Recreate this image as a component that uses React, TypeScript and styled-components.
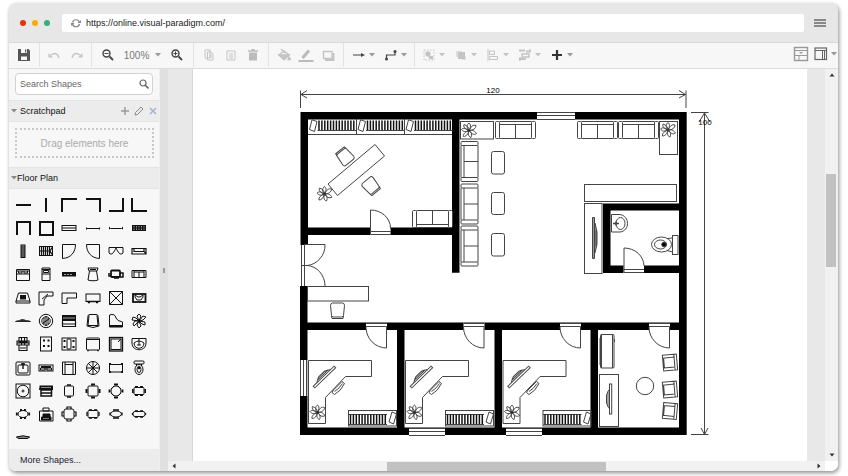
import React from "react";
import styled, { createGlobalStyle, css } from "styled-components";

const Global = createGlobalStyle`
  * { box-sizing: border-box; }
  body { margin: 0; background: #fff; font-family: "Liberation Sans", Arial, sans-serif; }
  button, input { font: inherit; }
`;

const Page = styled.div`
  min-height: 100vh;
  padding: 3px 10px 5px 9px;
  display: flex;
`;
const Win = styled.div`
  flex: 1;
  min-width: 0;
  display: flex;
  flex-direction: column;
  border-radius: 7px;
  overflow: hidden;
  background: #e7e7e7;
  box-shadow: 1px 2px 4px rgba(0, 0, 0, 0.45);
`;

/* browser chrome */
const Chrome = styled.header`
  height: 40px;
  flex: none;
  display: flex;
  align-items: center;
  padding: 0 12px 0 11px;
  border-bottom: 1px solid #dadada;
`;
const Dots = styled.div`
  display: flex;
  gap: 6px;
  margin-right: 12px;
`;
const Dot = styled.span<{ $c: string }>`
  width: 6px;
  height: 6px;
  border-radius: 50%;
  background: ${(p) => p.$c};
`;
const AddressBar = styled.div`
  flex: 1;
  height: 18px;
  display: flex;
  align-items: center;
  gap: 5px;
  padding-left: 9px;
  border-radius: 2px;
  background: #fff;
  margin-right: 10px;
`;
const Address = styled.input`
  flex: 1;
  min-width: 0;
  border: 0;
  padding: 0;
  outline: none;
  background: none;
  color: #222;
  font-size: 9px;
  line-height: 16px;
`;
const Plain = styled.button`
  border: 0;
  padding: 0;
  background: none;
  display: flex;
  align-items: center;
  justify-content: center;
  cursor: pointer;
`;

/* toolbar */
const Bar = styled.nav`
  height: 26px;
  flex: none;
  display: flex;
  background: #f7f7f7;
  border-bottom: 1px solid #dcdcdc;
`;
const Group = styled.div<{ $pad: number; $gap?: number; $last?: boolean }>`
  display: flex;
  align-items: center;
  height: 24px;
  padding: 0 ${(p) => p.$pad}px;
  gap: ${(p) => p.$gap || 0}px;
  ${(p) => !p.$last && css`border-right: 1px solid #e2e2e2;`}
`;
const Tool = styled(Plain)<{ $w?: number; $gap?: number }>`
  width: ${(p) => p.$w || 22}px;
  height: 22px;
  gap: ${(p) => p.$gap || 3}px;
  color: #777;
  font-size: 10px;
`;
const Spacer = styled.div`
  flex: 1;
`;

/* body */
const Body = styled.div`
  flex: 1;
  display: flex;
  min-height: 0;
`;
const Side = styled.aside`
  width: 151px;
  flex: none;
  display: flex;
  flex-direction: column;
  background: #f7f7f7;
  border-right: 1px solid #efefef;
`;
const SearchWrap = styled.label`
  margin: 4px 6px 5px;
  height: 22px;
  display: flex;
  align-items: center;
  padding: 0 3px 0 4px;
  background: #fff;
  border: 1px solid #d2d2d2;
  border-radius: 4px;
`;
const SearchInput = styled.input`
  flex: 1;
  min-width: 0;
  border: 0;
  padding: 0;
  outline: 0;
  background: none;
  font-size: 9px;
  &::placeholder { color: #666; opacity: 1; }
`;
const SectionHead = styled.div`
  height: 22px;
  flex: none;
  display: flex;
  align-items: center;
  padding: 0 0 0 2px;
  background: #ececec;
  border-top: 1px solid #e4e4e4;
  border-bottom: 1px solid #e4e4e4;
`;
const SectionTitle = styled(Plain)<{ $gap: number }>`
  gap: ${(p) => p.$gap}px;
  flex: 1;
  justify-content: flex-start;
  font-size: 9px;
  color: #111;
`;
const HeadActions = styled.div`
  display: flex;
  gap: 2px;
`;
const Mini = styled(Plain)`
  width: 12px;
  height: 12px;
`;
const DropZone = styled.div`
  margin: 6px 5px 9px 6px;
  height: 30px;
  flex: none;
  display: flex;
  align-items: center;
  justify-content: center;
  border: 2px dotted #c9c9c9;
  color: #aaa;
  font-size: 10px;
`;
const Shapes = styled.div`
  flex: 1;
  min-height: 256px;
  padding: 4px 8px 0 2px;
  display: grid;
  grid-template-columns: repeat(6, 1fr);
  grid-template-rows: repeat(11, 1fr);
`;
const More = styled(Plain)`
  height: 22px;
  flex: none;
  justify-content: flex-start;
  padding-left: 11px;
  background: #ececec;
  color: #223;
  font-size: 9px;
`;
const Splitter = styled.div`
  width: 8px;
  flex: none;
  display: flex;
  align-items: center;
  justify-content: center;
  background: #e0e0e0;
`;
const Grip = styled.span`
  width: 2px;
  height: 5px;
  background: #999;
`;
const Work = styled.main`
  flex: 1;
  min-width: 0;
  display: grid;
  grid-template-columns: 1fr 13px;
  grid-template-rows: 1fr 10px;
`;
const Desk = styled.div`
  min-width: 0;
  background: #e8e8e8;
  padding: 0 18px 0 24px;
  display: flex;
`;
const Sheet = styled.div`
  flex: 1;
  min-width: 0;
  background: #fff;
  border-left: 1px solid #d4d8d8;
`;
const Plan = styled.svg`
  display: block;
  width: 100%;
  height: auto;
`;
const VScroll = styled.div`
  display: flex;
  flex-direction: column;
  align-items: center;
  background: #f1f1f1;
`;
const HScroll = styled.div`
  display: flex;
  align-items: center;
  background: #f1f1f1;
`;
const Corner = styled.div`
  background: #fff;
`;
const Arrow = styled(Plain)`
  width: 12px;
  height: 12px;
  flex: none;
`;
const Track = styled.div<{ $v?: boolean }>`
  flex: 1;
  align-self: stretch;
  display: flex;
  flex-direction: ${(p) => (p.$v ? "column" : "row")};
  padding: ${(p) => (p.$v ? "0 2px 0 1px" : "1px 0 0")};
`;
const Gap = styled.span<{ $n: number }>`
  flex: ${(p) => p.$n};
`;
const Thumb = styled.span<{ $n: number }>`
  flex: ${(p) => p.$n};
  background: #c1c1c1;
`;

const Svg = ({ s = 16, c = "#555", children }: { s?: number; c?: string; children: React.ReactNode }) => (
  <svg width={s} height={s} viewBox={`${-s / 2} ${-s / 2} ${s} ${s}`} fill="none" stroke={c} strokeWidth="1.4" aria-hidden="true">
    {children}
  </svg>
);
const Caret = ({ c = "#999" }: { c?: string }) => (
  <svg width="6" height="4" viewBox="0 0 6 4" aria-hidden="true"><path d="M0 0H6L3 3.5Z" fill={c} /></svg>
);
const light = "#c4c4c4";

/* palette thumbnails, each centred on the origin */
const table = (w: number, h: number, r = 1) => <rect x={-w} y={-h} width={2 * w} height={2 * h} rx={r} />;
const B = { fill: "#111", stroke: "none" };

const shapes: [string, React.ReactNode][] = [
  ["Wall", <path d="M-7 0H8" strokeWidth="2" />],
  ["Vertical wall", <path d="M0-7V7" strokeWidth="2" />],
  ["Corner 1", <path d="M-7 7V-6H8" strokeWidth="2" />],
  ["Corner 2", <path d="M-7-6H7V7" strokeWidth="2" />],
  ["Corner 3", <path d="M7-7V6H-7" strokeWidth="2" />],
  ["Corner 4", <path d="M-7-7V6H8" strokeWidth="2" />],
  ["U wall", <path d="M-6 7V-6H7V7" strokeWidth="2" />],
  ["Room", <path d="M-6-6H7V7H-6Z" strokeWidth="2" />],
  ["Window", <><rect x="-7" y="-2.5" width="14" height="5" /><path d="M-7 0H7" /></>],
  ["Opening", <path d="M-6.5-.5V1.5M6.5-.5V1.5M-6.5.5H6.5" />],
  ["Sliding door", <path d="M-6.5-1V1L-5.5 .5H5.5L6.5 1V-1" />],
  ["Stairs", <><rect x="-7" y="-3" width="14" height="6" {...B} /><path d="M-5-2V2M-2.5-2V2M0-2V2M2.5-2V2M5-2V2" stroke="#bbb" strokeDasharray="1.5 1" strokeWidth=".8" /></>],
  ["Vertical stairs", <><rect x="-2.5" y="-6.5" width="5" height="13.5" {...B} /><path d="M-1.5-5H1.5M-1.5-3H1.5M-1.5-1H1.5M-1.5 1H1.5M-1.5 3H1.5M-1.5 5H1.5" stroke="#ddd" strokeWidth=".7" /></>],
  ["Landing stairs", <><rect x="-6.5" y="-4.5" width="13" height="9" /><path d="M-4.5-4.5V4.5M-2.5-4.5V4.5M-.5-4.5V4.5M1.5-4.5V4.5M-6.5 0H4L6.5-4M4 0L6.5 4M3.5-4.5V4.5" strokeWidth="1.2" /></>],
  ["Door left", <path d="M-6.5-6.5H6.5C6.5 1 2 7-6.5 7.5Z" />],
  ["Door right", <path d="M6.5-6.5H-6.5C-6.5 1-2 7 6.5 7.5Z" />],
  ["Folding door", <path d="M-7-3.5H7V2C4 5 2 1 0-3C-2 1-4 5-7 2Z" />],
  ["Counter sink", <path d="M-7-2.5H7V3H-7ZM-5-2.5V.5H5V-2.5M5 .5L7 3" strokeWidth="1.2" />],
  ["Double bed", <path d="M-6.5-4.5H6.5V6.5H-6.5ZM-6.5-3H6.5M-4.5-3V-1H-1V-3M1-3V-1H4.5V-3M-6.5 0H6.5" />],
  ["Single bed", <path d="M-4-6H4V6.5H-4ZM-4-4.5H4M-2.5-3.5H2.5V-1.5H-2.5ZM-4 0H4" />],
  ["Bookcase", <><rect x="-7" y="-2" width="14" height="4.5" {...B} /><path d="M-5 .5H4" stroke="#ccc" strokeDasharray="2 1" strokeWidth=".8" /></>],
  ["Chair", <path d="M-5-6H5L4-3H-4ZM-3.5-3L-5 6C-3 7 3 7 5 6L3.5-3M-3-4.5H3" />],
  ["Copier", <><rect x="-5" y="-3.5" width="9" height="6.5" rx="1" strokeWidth="1.8" /><path d="M-7-1V2H-5M4-1H7V3H4M-2 4H3" strokeWidth="1.5" /></>],
  ["Couch", <path d="M-7-3.5H7V3.5H-7ZM-5-3.5V3.5M5-3.5V3.5M0-2V3.5M-5-2H5" />],
  ["Desk corner", <><path d="M-4.5-5H4.5L7 3V5H-7V3ZM-7 3H7" /><rect x="-3" y="-3" width="6" height="4.5" {...B} /></>],
  ["Corner desk", <path d="M-7-6H7V-2H1L-2 2V7H-7ZM-4 1L2-4" />],
  ["L desk", <path d="M-7-5H7.5V0H-2V5.5H-7Z" />],
  ["Dresser", <><rect x="-7" y="-4" width="14" height="7.5" /><path d="M-5 4.5H-3M3 4.5H5M-6 3.5H6" strokeWidth="1.5" /></>],
  ["Elevator", <path d="M-6.5-6.5H6.5V6.5H-6.5ZM-6.5-6.5L6.5 6.5M6.5-6.5L-6.5 6.5" />],
  ["Fireplace", <><rect x="-6" y="-4" width="12.5" height="8" strokeWidth="1.8" /><path d="M-4-3V-1L-2 2H2L4-1V-3L1-1H-1Z" /></>],
  ["Flat TV", <path d="M-7.5 .5H7.5L5-.3H3L1-1.3H-2L-3.5-.3H-5Z" fill="#333" strokeWidth=".8" />],
  ["Floor lamp", <><circle r="6.7" /><circle r="4.2" /><path d="M-2-3V3M0-5V5M2-3V3M-3 2L3-2" /></>],
  ["Keyboard piano", <><rect x="-7" y="-6" width="14" height="6" {...B} /><path d="M-6.5 0V5.5H6.5V0M-7 3H7M-2 5.5H2" strokeWidth="1.2" /><path d="M-6-3H6" stroke="#ccc" strokeWidth=".8" /></>],
  ["Office chair", <path d="M-5-5Q-5-6.5-3-6.5H3Q5-6.5 5-5L6 5Q0 8-6 5ZM-4-5.5L-5 4.5H5L4-5.5" />],
  ["Piano", <path d="M-6.5 6V-6Q-1-8 0-3Q1 0 6.5 1V6ZM-6.5 4.5H6.5M-6.5 5.5H6.5" />],
  ["Plant", <path d="M0 0L-2-5L0-7L2-5ZM0 0L4-5L7-4L4-1ZM0 0L6 1L6 4L3 3ZM0 0L2 5L0 7L-2 4ZM0 0L-5 5L-6 3L-4 0ZM0 0L-7-1L-6-4L-3-3Z" />],
  ["Printer", <path d="M-4-6.5H4V-2H-4ZM-6-3H6V1H-6ZM-4 1V6.5H4V1M-1.5-6V1M1.5-6V1M-3 4H3M-6-1H6" strokeWidth="1.1" />],
  ["Range", <><rect x="-5.5" y="-7" width="11" height="14" /><path d="M-3-3.5H-1M1.5-3.5H3.5M-3 2H-1M1.5 2H3.5" strokeWidth="2" /></>],
  ["Range 2", <><rect x="-7" y="-6" width="14" height="12" /><rect x="-2" y="-5" width="4" height="10" rx="1" /><path d="M-5.5-3H-3.5M3.5-3H5.5M-5.5 3H-3.5M3.5 3H5.5" strokeWidth="2" /></>],
  ["Refrigerator", <><rect x="-6.5" y="-6" width="13" height="12" rx="1" /><path d="M-6.5-4.5H6.5M-6 6.7H-4M4 6.7H6" /></>],
  ["Shower", <><rect x="-6.5" y="-6.5" width="13" height="13.5" strokeWidth="1.3" /><rect x="-5" y="-5" width="10" height="10.5" /><path d="M2-2L5-5" /></>],
  ["Basin", <path d="M-7-5.5H7V-1C7 8-7 8-7-1ZM-5-1Q0-5 5-1C5 6-5 6-5-1ZM0-5V1M-2 1H2" />],
  ["Sink", <><rect x="-7" y="-6" width="14" height="13" rx="1" /><rect x="-5" y="-3" width="10" height="8" rx="1" /><path d="M0-5V1M-2-4H2" strokeWidth="1.4" /></>],
  ["Double sink", <><rect x="-7" y="-3" width="14" height="6" /><path d="M-5.5 0H-1V2H-5.5ZM1 0H5.5V2H1ZM0-2V2" /><path d="M-5-1H5" strokeWidth="1.8" /></>],
  ["Armchair", <path d="M-6.5-6H6.5V6.5H-6.5ZM-4-6V6.5M4-6V6.5M-4-3.5H4" />],
  ["Spiral stairs", <><circle r="6.5" /><circle r="1" /><path d="M0-6.5V6.5M-6.5 0H6.5M-4.6-4.6L4.6 4.6M-4.6 4.6L4.6-4.6" /></>],
  ["Low table", <><rect x="-6.5" y="-3.5" width="13" height="7.5" /><path d="M-7-4H-5M5-4H7M-7 4H-5M5 4H7" strokeWidth="2" /></>],
  ["Toilet", <><rect x="-5" y="-7" width="10" height="3" rx="1" /><ellipse cy="1.5" rx="4" ry="5" /><ellipse cy="1.5" rx="2" ry="3" /><circle cy="0" r="1.2" {...B} /><path d="M-2.5-4V-2M2.5-4V-2" /></>],
  ["Tub", <><rect x="-7" y="-7" width="14" height="14" /><circle r="5.8" /><circle r="1" /></>],
  ["Workstation", <><path d="M-6.5-5.5H7V-1H-6.5Z" {...B} /><path d="M-5-1H5.5V5H-5ZM-5 2H5.5M-7-2H7" strokeWidth="1.5" /><path d="M-5-3.5H5" stroke="#aaa" strokeWidth=".8" /></>],
  ["Table 2", <>{table(4.5, 5)}<path d="M-2-6H2M-2 6H2" strokeWidth="1.6" /></>],
  ["Table 4", <>{table(5, 5)}<path d="M-2-6.5H2M-2 6.5H2M-6.5-2V2M6.5-2V2" strokeWidth="2" /></>],
  ["Round table 4", <><circle r="5" /><path d="M-6.5-1.5V1.5M6.5-1.5V1.5M-2-6.5H2M-2 6.5H2" strokeWidth="1.8" /><path d="M-5-2L-2-5M5-2L2-5M-5 2L-2 5M5 2L2 5" /></>],
  ["Table 6", <>{table(5, 3.5)}<path d="M-4-4.3H-1M1-4.3H4M-4 4.3H-1M1 4.3H4M-6.2-2V2M6.2-2V2" strokeWidth="1.6" /></>],
  ["Oval table", <><ellipse rx="5" ry="3.5" /><path d="M-3-4H-1M1-4H3M-3 4H-1M1 4H3M-6.2-1.5V1.5M6.2-1.5V1.5" strokeWidth="1.8" /></>],
  ["Desk workstation", <><path d="M-6.5-3H7V7H-6.5ZM-3-6H3V-3H-3Z" /><path d="M-3 0H4V3H-3ZM-4.5 3H5V6H-4.5Z" fill="#111" /><path d="M-3 4.5H3" stroke="#aaa" strokeWidth=".7" /></>],
  ["Square table 8", <>{table(5, 5, 2)}<path d="M-2-5V-7H2V-5M-2 5V7H2V5M-5-2H-7V2H-5M5-2H7V2H5" strokeWidth="1.2" /></>],
  ["Table 6 small", <>{table(5, 3.5)}<path d="M-4-4H-1M1-4H4M-4 4H-1M1 4H4M-6-2V2M6-2V2" strokeWidth="1.3" /></>],
  ["Oval table 6", <><ellipse rx="5.5" ry="3" /><path d="M-3-4H3M-3 4H3M-6-1.5V1.5M6-1.5V1.5" strokeWidth="1.3" /></>],
  ["Oval table 8", <>{table(6, 2.5, 2)}<path d="M-4-3H-1M1-3H4M-4 3H-1M1 3H4M-6.5-1V1M6.5-1V1" strokeWidth="1.3" /></>],
  ["Curved screen", <path d="M-6.5 0Q0-2.5 6.5 0L5 1.5H-5ZM-6.5 0H6.5" />],
];

/* floor plan parts */
type P = { x: number; y: number; r?: number };
const at = ({ x, y, r = 0 }: P) => `translate(${x} ${y}) rotate(${r})`;

const Plant = (p: P) => (
  <g transform={at(p)} strokeWidth="1">
    <path d="M0 0C-3-3-2-6 0-7.5C2-6 2-3 0 0ZM0 0C2-4 4-6 7-5C7-2 4 0 0 0ZM0 0C4-1 6 1 7.5 3C5 5 2 3 0 0ZM0 0C3 2 3 5 2 7C-1 6-1 3 0 0ZM0 0C-1 4-3 6-5.5 6C-6 3-3 1 0 0ZM0 0C-4 2-6 1-7.5-1C-6-3-3-2 0 0ZM0 0C-4-1-6-4-5-6C-2-5 0-3 0 0Z" />
    <circle r="1.2" fill="#222" />
  </g>
);
const Sofa = (p: P) => (
  <g transform={at(p)}>
    <rect x="-20" y="-8.5" width="4" height="17" rx="1" />
    <rect x="16" y="-8.5" width="4" height="17" rx="1" />
    <path d="M-16-8.5H16M-16-5.5H16M-16 8.5H16M0-5.5V8.5" />
  </g>
);
const Chair = (p: P) => (
  <g transform={at(p)}>
    <path d="M-7-5Q-7-7-5-7.5H5Q7-7.5 7-5L6 5Q6 6.5 4 6.5H-4Q-6 6.5-6 5ZM-6 5.5L-5.5 8H5.5L6 5.5" />
  </g>
);
const Armchair = (p: P) => (
  <g transform={at(p)}>
    <path d="M-7-8H7V8H-7ZM-7-5H4.5V5H-7M4.5-8V8M-6-5V5" />
  </g>
);
const Books = ({ x, y, n = 13, flip }: { x: number; y: number; n?: number; flip?: boolean }) => (
  <g transform={`translate(${x} ${y})`}>
    {Array.from({ length: n }, (_, i) => (
      <path key={i} d={`M${(flip ? 2.5 : 11) + i * 2.9} 1.5V11.5`} stroke="#111" strokeWidth="1.5" />
    ))}
    {!flip && <path d="M9.5 11.5H48" />}
    {flip ? <path d="M1 11.5H39M41 9L44-1L48.5 1L45.5 11Z" /> : <path d="M1.5 10.5L4 .8L9 2.500L6.5 12.5Z" />}
  </g>
);
const Door = ({ x, y }: { x: number; y: number }) => (
  <g>
    <rect x={x} y={y} width="21" height="8" fill="#fff" stroke="none" />
    <path d={`M${x} ${y + 0.5}H${x + 21}M${x} ${y + 3.5}H${x + 20.5}V${y + 25}A20.5 21 0 0 1 ${x} ${y + 4}`} />
  </g>
);
const DoorUp = ({ x, y }: { x: number; y: number }) => (
  <g>
    <rect x={x} y={y} width="20.5" height="8" fill="#fff" stroke="none" />
    <path d={`M${x + 20.5} ${y + 7.5}H${x + 0.5}V${y - 17}A20 18 0 0 1 ${x + 20.5} ${y + 1}M${x} ${y + 4.5}H${x + 20.5}`} />
  </g>
);
const HWindow = ({ x, y, w }: { x: number; y: number; w: number }) => (
  <g>
    <rect x={x} y={y} width={w} height="8" fill="#fff" stroke="none" />
    <path d={`M${x} ${y + 0.5}H${x + w}M${x} ${y + 3.5}H${x + w}M${x} ${y + 7.5}H${x + w}`} />
  </g>
);
const Screen = (p: P & { len?: number }) => {
  const h = (p.len || 30) / 2;
  return (
    <g transform={at(p)}>
      <rect x="1" y={-h} width="2.2" height={h * 2} />
      <path d={`M1 ${-h * 0.65}L-.5 ${-h * 0.5}L-2-4V4L-.5 ${h * 0.5}L1 ${h * 0.65}M-.5 ${-h * 0.5}V${h * 0.5}`} />
    </g>
  );
};
const Office = ({ x }: { x: number }) => (
  <g transform={`translate(${x} 0)`}>
    <path d="M308.5 360.5H371.5V376.5H345.5L325.5 397.5V423.5H308.5Z" />
    <Screen x={323} y={375.5} r={46} len={29} />
    <path d="M333.5 390L342 381.5L344.5 383.500Q341 391 334.500 394.500L332 392.500ZM334.500 391.500Q339 389 342.500 383.500" />
    <Plant x={317.5} y={412.5} />
    <rect x="348.5" y="410.5" width="48" height="15.5" />
    <path d="M348.5 414.5H387" />
    <Books x={348} y={413} flip />
  </g>
);

const FloorPlan = () => (
  <Plan viewBox="193 69 614 392" role="img" aria-label="Floor plan" fill="none" stroke="#444" strokeWidth="1">
    <path d="M300.5 90.5V108M686 90.5V108M301 94.5H686M307 90.5L301 94.5L307 98M679 90.5L685.5 94.5L679 98" />
    <path d="M691 112.5H708.5M691 434.5H708.5M704.5 113V434.5M699 122L704.5 113L710 122M701 428L704.5 434.5L708 428" />
    <path fill="#000" stroke="none" fillRule="evenodd" d="M300.5 112H686.7V435H300V286H307.5V322.5H679V273H603V203.5H679V119.5H459.5V272.7H452V235H308V245H300.5ZM308 119.5V227.5H452V119.5ZM610.5 210.5V265.5H679V210.5ZM307.5 330V427.5H397V330ZM404.5 330V427.5H494.5V330ZM502 330V427.5H590.5V330ZM598 330V427.5H679V330Z" />
    <HWindow x={537} y={112} w={38} />
    <HWindow x={409} y={428} w={36} />
    <HWindow x={506} y={428} w={36} />
    <rect x="300" y="360" width="7.5" height="36" fill="#fff" stroke="none" />
    <path d="M300.5 360V396M303.5 360V396M306.5 360V396M301.5 245V286M304.5 245V286" />
    <path d="M304 244.5H325A20 20.5 0 0 1 307 265.5H301M307 265.5A19 20.5 0 0 1 325 286" />
    <DoorUp x={370} y={227} />
    <DoorUp x={623.5} y={265} />
    <Door x={366} y={323} />
    <Door x={463.5} y={323} />
    <Door x={560} y={323} />
    <Door x={649} y={323} />

    <path d="M308 134.5H452M356.5 119V134.5M404.5 119V134.5" />
    <Books x={308} y={119} />
    <Books x={356.5} y={119} />
    <Books x={404.5} y={119} />
    <path d="M375 144.5L384.5 156L337.5 195.5L328 184Z" />
    <Chair x={345} y={156.5} r={141} />
    <Chair x={371} y={186} r={-40} />
    <Plant x={324.5} y={194} />
    <Sofa x={432.5} y={219} r={180} />

    <rect x="460.5" y="121.5" width="33" height="17.5" />
    <Plant x={469} y={130.5} />
    <Sofa x={515.5} y={130} />
    <Sofa x={597.5} y={130} />
    <Sofa x={638.5} y={130} />
    <rect x="659.5" y="121.5" width="18" height="33" />
    <Plant x={668} y={130} />
    <Sofa x={469.5} y={161.5} r={-90} />
    <Sofa x={469.5} y={204} r={-90} />
    <Sofa x={469.5} y={246} r={-90} />
    <rect x="491.5" y="151.5" width="13" height="22.5" rx="2" />
    <rect x="491.5" y="192.5" width="13" height="22" rx="2" />
    <rect x="491.5" y="233.5" width="13" height="22.5" rx="2" />
    <rect x="584.5" y="184.5" width="92" height="17" />
    <rect x="584.5" y="203.5" width="17.5" height="70" />
    <path d="M592.5 217.5H594.5V258.5H592.5ZM595 223L597 232V244L595 253M596 230V246" fill="#999" />

    <path d="M611.5 214.5H620C630 216 630 231 620 232H611.5Z" />
    <ellipse cx="620.5" cy="223.5" rx="4.5" ry="6" />
    <path d="M613 223.5H619M616 221.5V225.5" strokeWidth="1.5" />
    <rect x="672.5" y="235.5" width="5.5" height="19" />
    <ellipse cx="661.5" cy="244.5" rx="10" ry="7.5" />
    <ellipse cx="660.5" cy="244.5" rx="6" ry="4.5" />
    <circle cx="664" cy="244.5" r="2.3" fill="#000" />
    <path d="M667 238.5L672.5 238M667 250.5L672.5 252" />

    <rect x="307.5" y="286.5" width="61" height="14.5" />
    <Chair x={337.5} y={310.5} />

    <Office x={0} />
    <Office x={97} />
    <Office x={194.5} />

    <rect x="600.5" y="334.5" width="13.5" height="33.5" rx="1" />
    <path d="M601.5 334V368M612.5 334V368M600 338V365M614.5 339V342" />
    <rect x="599.5" y="374.5" width="19" height="52" />
    <Screen x={608.5} y={399} len={30} />
    <circle cx="645" cy="386" r="8.7" />
    <Armchair x={670} y={362.5} r={-5} />
    <Armchair x={670} y={389.5} r={-5} />
    <Armchair x={670} y={411} r={5} />

    <g fill="#000" stroke="none" fontFamily="Liberation Sans, Arial, sans-serif" fontSize="8" textAnchor="middle">
      <text x="493" y="93">120</text>
      <text x="705" y="125">100</text>
    </g>
  </Plan>
);

const Glass = ({ sign }: { sign?: string }) => (
  <Svg s={14} c="#444"><circle cx="-1.5" cy="-1.5" r="3.5" strokeWidth="1.4" /><path d="M1.5 1.5L5 5" strokeWidth="1.8" />{sign && <path d={sign} strokeWidth="1" />}</Svg>
);

export default function App() {
  return (
    <>
      <Global />
      <Page>
        <Win>
          <Chrome>
            <Dots><Dot $c="#e0350b" /><Dot $c="#fbac00" /><Dot $c="#33b077" /></Dots>
            <AddressBar>
              <Plain aria-label="Reload"><Svg s={10} c="#888"><path d="M3.5-.5A3.6 3.6 0 0 0-3.5-.5M-3.5 1A3.6 3.6 0 0 0 3.5 1M2-.5H4.5V-2.5M-2 .5H-4.5V2.5" strokeWidth="1.2" /></Svg></Plain>
              <Address aria-label="Address" defaultValue="https://online.visual-paradigm.com/" />
            </AddressBar>
            <Plain aria-label="Menu"><Svg s={12} c="#888"><path d="M-6-3H6M-6 0H6M-6 3H6" strokeWidth="2" /></Svg></Plain>
          </Chrome>
          <Bar aria-label="Editor toolbar">
            <Group $pad={4}>
              <Tool aria-label="Save"><Svg s={12}><path d="M-6-6H4.500L6-4.500V6H-6Z" fill="#555" stroke="none" /><path d="M-3-6H3V-2H-3ZM-3 1.5H3V5H-3Z" fill="#f7f7f7" stroke="none" /><rect x="1" y="-5.500" width="1.200" height="3" fill="#555" stroke="none" /></Svg></Tool>
            </Group>
            <Group $pad={3} $gap={1}>
              <Tool aria-label="Undo"><Svg s={14} c={light}><path d="M5 3Q3-4-3 0" /><path d="M-5.5-2V2.5H-1Z" fill={light} stroke="none" /></Svg></Tool>
              <Tool aria-label="Redo"><Svg s={14} c={light}><path d="M-5 3Q-3-4 3 0" /><path d="M5.5-2V2.5H1Z" fill={light} stroke="none" /></Svg></Tool>
            </Group>
            <Group $pad={5} $gap={3}>
              <Tool aria-label="Zoom out"><Glass sign="M-3.5-1.5H.5" /></Tool>
              <Tool $w={41} $gap={6} aria-label="Zoom level">100%<Caret /></Tool>
              <Tool aria-label="Zoom in"><Glass sign="M-3.5-1.5H.5M-1.5-3.5V.5" /></Tool>
            </Group>
            <Group $pad={4}>
              <Tool aria-label="Copy"><Svg s={12} c={light}><path d="M-4-5H1V3H-4ZM-1.5-3H2L4-1V5H-1.5Z" fill="#f7f7f7" strokeWidth="1" /><path d="M0 0H3M0 2H3" strokeWidth="1" /></Svg></Tool>
              <Tool aria-label="Paste"><Svg s={12} c={light}><path d="M-4-4H4V5H-4Z" strokeWidth="1" /><path d="M-2-1H2M-2 1H2M-2 3H2" strokeWidth="1" /></Svg></Tool>
              <Tool aria-label="Delete"><Svg s={12} c="#bbb"><path d="M-4-2.5H4V5.5H-4Z" fill="#bbb" stroke="none" /><path d="M-5-4H5M-1.5-5.3H1.5" /></Svg></Tool>
            </Group>
            <Group $pad={4}>
              <Tool aria-label="Fill colour"><Svg s={14} c={light}><path d="M-5 0L0-4L5 0L0 4.5Z" /><path d="M-5 0H5L0 4.5ZM5 2L6.5 4.5H4Z" fill={light} /><path d="M-3-6L1-2" /></Svg></Tool>
              <Tool aria-label="Line colour"><Svg s={16} c="#bbb"><path d="M-3.5 3L3-4.5" strokeWidth="3" /><path d="M-7.5 6H7.5" strokeWidth="2" /></Svg></Tool>
              <Tool aria-label="Shadow"><Svg s={14} c={light}><path d="M-3 5H5.5V-2" strokeWidth="2" /><rect x="-4.5" y="-3.5" width="8.5" height="7" fill="#f7f7f7" /></Svg></Tool>
            </Group>
            <Group $pad={3}>
              <Tool $w={32} aria-label="Connection"><Svg s={14} c="#444"><path d="M-6 0H3" strokeWidth="1.2" /><path d="M2-2L6 0L2 2Z" fill="#444" stroke="none" /></Svg><Caret /></Tool>
              <Tool $w={32} aria-label="Waypoints"><Svg s={14} c="#444"><path d="M-4.5 4V0H4V-4" strokeWidth="1.2" /><circle cx="-4.5" cy="4" r="1.5" fill="#444" stroke="none" /><circle cx="4" cy="-3.5" r="1.5" fill="#444" stroke="none" /></Svg><Caret /></Tool>
            </Group>
            <Group $pad={2} $last>
              <Tool $w={32} aria-label="Group"><Svg s={14} c={light}><rect x="-5" y="-5" width="10" height="10" strokeDasharray="1.5 1.5" strokeWidth="1" /><circle cx="-1" cy="-1" r="2.7" fill={light} stroke="none" /><path d="M0 1H4V4H0Z" fill={light} stroke="none" /></Svg><Caret c={light} /></Tool>
              <Tool $w={32} aria-label="Order"><Svg s={14} c={light}><path d="M-5-4H1V2H-5ZM1 1H5V5H1Z" fill="#ddd" stroke="none" /><path d="M-3-3H4V4H-3Z" fill={light} stroke="none" /></Svg><Caret c={light} /></Tool>
              <Tool $w={32} aria-label="Align"><Svg s={14} c={light}><path d="M-5-6V6M-3.5-4H1.5V-.5H-3.5ZM-3.5 1.5H4.5V4.5H-3.5Z" strokeWidth="1" /></Svg><Caret c={light} /></Tool>
              <Tool $w={32} aria-label="Distribute"><Svg s={14} c={light}><path d="M-6-4.5H0M1-3.500H6M-6 4H1" strokeWidth="2" /><path d="M-3-1H4V2H-3ZM5-6V-3M-5 2V6" /></Svg><Caret c={light} /></Tool>
              <Tool $w={32} aria-label="Insert"><Svg s={14} c="#333"><path d="M-5 0H5M0-5V5" strokeWidth="2.2" /></Svg><Caret /></Tool>
            </Group>
            <Spacer />
            <Tool aria-label="Format panel"><Svg s={16} c="#999"><rect x="-6.5" y="-6.5" width="13" height="13" /><path d="M-6-3.5H6M-6 1.5H6M-2 1.5V6" strokeWidth="1" /><path d="M-2-2H2L0 0Z" fill="#999" stroke="none" /></Svg></Tool>
            <Tool $w={26} aria-label="Layout"><Svg s={14} c="#666"><rect x="-6" y="-6" width="11.5" height="11.5" strokeWidth="1.2" /><path d="M-6-3.5H5.5M1.5-3V5M3.5-3V5" strokeWidth="1" /></Svg><Caret /></Tool>
          </Bar>
          <Body>
            <Side>
              <SearchWrap>
                <SearchInput placeholder="Search Shapes" aria-label="Search Shapes" />
                <Svg s={10} c="#666"><circle cx="-1" cy="-1" r="3" strokeWidth="1.2" /><path d="M1 1L4.5 4.5" strokeWidth="1.6" /></Svg>
              </SearchWrap>
              <SectionHead>
                <SectionTitle $gap={3}><Caret c="#888" />Scratchpad</SectionTitle>
                <HeadActions>
                  <Mini aria-label="Add"><Svg s={10} c="#999"><path d="M-4 0H4M0-4V4" /></Svg></Mini>
                  <Mini aria-label="Edit"><Svg s={10} c="#888"><path d="M-4 4L-3.5 1.5L2-4L4-2L-1.5 3.5Z" strokeWidth="1" /></Svg></Mini>
                  <Mini aria-label="Close"><Svg s={10} c="#9fb0cf"><path d="M-3-3L3 3M3-3L-3 3" /></Svg></Mini>
                </HeadActions>
              </SectionHead>
              <DropZone>Drag elements here</DropZone>
              <SectionHead>
                <SectionTitle $gap={0}><Caret c="#888" />Floor Plan</SectionTitle>
              </SectionHead>
              <Shapes>
                {shapes.map(([name, art]) => (
                  <Plain key={name} aria-label={name}>
                    <svg width="16" height="16" viewBox="-8 -8 16 16" fill="none" stroke="#111" strokeWidth="1" aria-hidden="true">{art}</svg>
                  </Plain>
                ))}
              </Shapes>
              <More>More Shapes...</More>
            </Side>
            <Splitter><Grip /></Splitter>
            <Work>
              <Desk><Sheet><FloorPlan /></Sheet></Desk>
              <VScroll>
                <Arrow aria-label="Scroll up"><Svg s={8} c="none"><path d="M-2.5 1.5L0-1.5L2.5 1.5Z" fill="#333" /></Svg></Arrow>
                <Track $v><Gap $n={93} /><Thumb $n={93} /><Gap $n={182} /></Track>
                <Arrow aria-label="Scroll down"><Svg s={8} c="none"><path d="M-2.5-1.5L0 1.5L2.5-1.5Z" fill="#333" /></Svg></Arrow>
              </VScroll>
              <HScroll>
                <Arrow aria-label="Scroll left"><Svg s={8} c="none"><path d="M1.5-2.5L-1.5 0L1.5 2.5Z" fill="#333" /></Svg></Arrow>
                <Track><Gap $n={207} /><Thumb $n={219} /><Gap $n={207} /></Track>
                <Arrow aria-label="Scroll right"><Svg s={8} c="none"><path d="M-1.5-2.5L1.5 0L-1.5 2.5Z" fill="#333" /></Svg></Arrow>
              </HScroll>
              <Corner />
            </Work>
          </Body>
        </Win>
      </Page>
    </>
  );
}
